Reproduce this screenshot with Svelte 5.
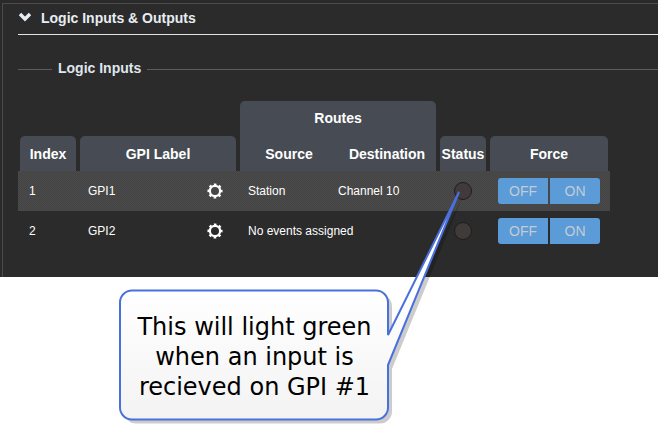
<script>
  const rows = [
    { index: 1, label: 'GPI1', source: 'Station', dest: 'Channel 10' },
    { index: 2, label: 'GPI2', source: 'No events assigned', dest: '' }
  ];
</script>

{#snippet gear()}
  <svg class="gear" width="16" height="16" viewBox="0 0 16 16" aria-hidden="true">
    <circle cx="8" cy="8" r="5.1" fill="none" stroke="#fff" stroke-width="2.2"/>
    <circle cx="8" cy="8" r="6.6" fill="none" stroke="#fff" stroke-width="1.9" stroke-dasharray="2.6 2.58" stroke-dashoffset="1.3"/>
  </svg>
{/snippet}

<div class="page">
  <div class="outer">
  <section class="panel">
    <header class="head">
      <svg class="chev" width="14" height="10" viewBox="0 0 14 10" aria-hidden="true">
        <path d="M2 2l5 5 5-5" fill="none" stroke="#e6edf2" stroke-width="3.4"/>
      </svg>
      <h2>Logic Inputs &amp; Outputs</h2>
    </header>

    <div class="legend">
      <span class="rule short"></span>
      <h3>Logic Inputs</h3>
      <span class="rule"></span>
    </div>

    <div class="table">
      <div class="thead">
        <div class="th">Index</div>
        <div class="th">GPI Label</div>
        <div class="th routes">
          <div class="routes-title">Routes</div>
          <div class="routes-sub"><span>Source</span><span>Destination</span></div>
        </div>
        <div class="th">Status</div>
        <div class="th">Force</div>
      </div>
      {#each rows as r, i}
        <div class="tr" class:hi={i === 0}>
          <div class="td idx">{r.index}</div>
          <div class="td lab"><span>{r.label}</span>{@render gear()}</div>
          <div class="td rt"><span class="src">{r.source}</span>{#if r.dest}<span>{r.dest}</span>{/if}</div>
          <div class="td st"><span class="led"></span></div>
          <div class="td fo"><button>OFF</button><button>ON</button></div>
        </div>
      {/each}
    </div>
  </section>
  </div>

  <svg class="pointer" width="658" height="434" viewBox="0 0 658 434" aria-hidden="true">
    <defs>
      <linearGradient id="fillg" gradientUnits="userSpaceOnUse" x1="0" y1="290" x2="0" y2="420">
        <stop offset="0" stop-color="#ffffff"/>
        <stop offset="1" stop-color="#f3f3f3"/>
      </linearGradient>
    </defs>
    <path fill="#000" fill-opacity=".2" transform="translate(4 4)" d="M132 290.5H376a12 12 0 0 1 12 12V335L459 192 388 365V407.500a12 12 0 0 1-12 12H132a12 12 0 0 1-12-12V302.500a12 12 0 0 1 12-12z"/>
    <path fill="url(#fillg)" stroke="#4a70dc" stroke-width="2" d="M132 290.5H376a12 12 0 0 1 12 12V335L459 192 388 365V407.500a12 12 0 0 1-12 12H132a12 12 0 0 1-12-12V302.500a12 12 0 0 1 12-12z"/>
  </svg>
  <p class="note">This will light green<br/>when an input is<br/>recieved on GPI #1</p>
</div>

<style>
  :global(body) { margin: 0; background: #fff; }
  .page {
    position: relative;
    width: 658px;
    height: 434px;
    overflow: hidden;
    background: #fff;
    font-family: "Liberation Sans", Arial, sans-serif;
  }
  .outer {
    box-sizing: border-box;
    height: 277px;
    padding: 3px 0 0 2px;
    background: #2a2a2a;
  }
  .panel {
    box-sizing: border-box;
    height: 274px;
    border: solid #4c4c4c;
    border-width: 1px 0 0 1px;
    background-color: #2d2d2d;
    background-image: conic-gradient(rgba(0,0,0,.08) 25%, transparent 0 50%, rgba(0,0,0,.08) 0 75%, transparent 0);
    background-size: 2px 2px;
  }
  .head {
    display: flex;
    align-items: center;
    gap: 9px;
    height: 31px;
    margin-left: 15px;
    box-sizing: border-box;
    border-bottom: 1px solid #e4e4e4;
    color: #e6edf2;
  }
  .chev { margin-top: -4px; }
  h2 { margin: 0; font-size: 14px; font-weight: 700; position: relative; top: -1px; }
  .legend {
    display: flex;
    align-items: center;
    gap: 6px;
    margin: 23px 0 0 15px;
    height: 20px;
  }
  .rule { flex: 1; height: 1px; background: #5c5c5c; position: relative; top: 1px; }
  .rule.short { flex: 0 0 34px; }
  h3 { margin: 0; font-size: 14px; font-weight: 700; color: #dfe6ec; }
  .table { margin: 23px 0 0 15px; width: 592px; }
  .thead, .tr {
    display: grid;
    grid-template-columns: 56px 156px 196px 46px 118px;
    column-gap: 4px;
    padding: 0 2px;
  }
  .thead { align-items: end; height: 70px; }
  .th {
    box-sizing: border-box;
    height: 35px;
    display: flex;
    align-items: center;
    justify-content: center;
    background: #474c54;
    border-radius: 5px 5px 0 0;
    color: #fff;
    font-size: 14px;
    font-weight: 700;
    white-space: nowrap;
  }
  .routes { height: 70px; flex-direction: column; align-items: stretch; }
  .routes-title { height: 35px; line-height: 34px; text-align: center; }
  .routes-sub { height: 35px; display: grid; grid-template-columns: 98px 98px; align-items: center; text-align: center; }
  .tr { height: 40px; align-items: center; color: #fff; font-size: 12px; }
  .tr.hi {
    background-color: #4a4a4a;
    background-image: conic-gradient(rgba(0,0,0,.08) 25%, transparent 0 50%, rgba(0,0,0,.08) 0 75%, transparent 0);
    background-size: 2px 2px;
  }
  .idx { padding-left: 9px; }
  .lab { display: flex; align-items: center; justify-content: space-between; padding: 0 13px 0 8px; }
  .gear { display: block; }
  .rt { display: flex; padding-left: 8px; white-space: nowrap; }
  .src { width: 90px; }
  .st { display: flex; justify-content: center; }
  .led {
    width: 16px; height: 16px;
    border-radius: 50%;
    background: #403a3a;
    border: 1px solid #1e1e1e;
  }
  .fo { display: flex; gap: 2px; padding-left: 8px; }
  button {
    width: 50px; height: 26px;
    padding: 0;
    border: 0;
    background: #5a9bd8;
    color: #c3ccd3;
    font: 14px "Liberation Sans", Arial, sans-serif;
    border-radius: 3px 0 0 3px;
  }
  button + button { border-radius: 0 3px 3px 0; }
  .pointer { position: absolute; left: 0; top: 0; }
  .note {
    position: absolute;
    left: 120px;
    top: 312px;
    width: 269px;
    margin: 0;
    text-align: center;
    font: 24px/30px "DejaVu Sans", Verdana, sans-serif;
    color: #000;
  }
</style>
